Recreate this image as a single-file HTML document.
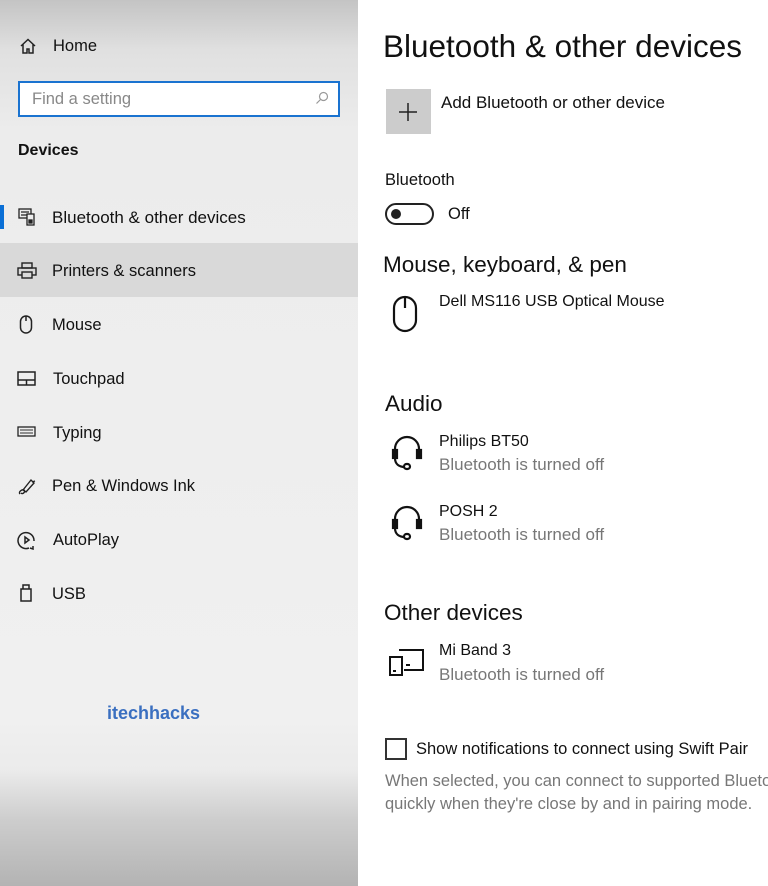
<!DOCTYPE html>
<html><head><meta charset="utf-8"><style>
*{margin:0;padding:0;box-sizing:border-box}
body{width:768px;height:886px;position:relative;overflow:hidden;background:#fff;font-family:"Liberation Sans",sans-serif;color:#111}
#side{position:absolute;left:0;top:0;width:358px;height:886px;background:linear-gradient(to bottom,#c4c4c4 0px,#e0e0e0 50px,#ececec 130px,#eeeeee 400px,#f0f0f0 720px,#ebebeb 770px,#cdcdcd 820px,#b3b3b3 886px)}
.t{position:absolute;white-space:nowrap}
.s{font-size:16.5px;color:#111}
.ic{position:absolute}
.r{font-size:16px}
.g{color:#777;font-size:17px}
</style></head><body>
<div id="side">
 <svg class="ic" style="left:19px;top:37px" width="18" height="18" viewBox="0 0 18 18" fill="none" stroke="#222" stroke-width="1.5"><path d="M2 9L9 2.5 16 9M4 7.5V16h4v-4h2v4h4V7.5"/></svg>
 <div class="t s" style="left:53px;top:37px">Home</div>
 <div style="position:absolute;left:18px;top:81px;width:322px;height:36px;border:2px solid #1a73d0;background:#fff"></div>
 <div class="t" style="left:32px;top:90px;font-size:16.5px;color:#888">Find a setting</div>
 <svg class="ic" style="left:315px;top:91px" width="14" height="14" viewBox="0 0 14 14" fill="none" stroke="#999" stroke-width="1.2"><circle cx="8.5" cy="5.5" r="4"/><path d="M5.5 8.5L1.5 12.5"/></svg>
 <div class="t" style="left:18px;top:142px;font-size:16px;font-weight:bold">Devices</div>
 <div style="position:absolute;left:0;top:205px;width:4px;height:24px;background:#0a6fd6"></div>
 <svg class="ic" style="left:18px;top:208px" width="19" height="19" viewBox="0 0 19 19" fill="none" stroke="#222" stroke-width="1.3"><rect x="1" y="1" width="12" height="9"/><path d="M3 4h8M3 7h8"/><rect x="9" y="6" width="7" height="11" fill="#eee"/><rect x="11" y="12" width="3" height="3" fill="#222"/></svg>
 <div class="t s" style="left:52px;top:208px;font-size:17px">Bluetooth &amp; other devices</div>
 <div style="position:absolute;left:0;top:243px;width:358px;height:54px;background:#d9d9d9"></div>
 <svg class="ic" style="left:17px;top:262px" width="20" height="18" viewBox="0 0 20 18" fill="none" stroke="#222" stroke-width="1.4"><rect x="5" y="1" width="10" height="5"/><rect x="1" y="6" width="18" height="7"/><rect x="5" y="10" width="10" height="6" fill="#d9d9d9"/></svg>
 <div class="t s" style="left:52px;top:262px">Printers &amp; scanners</div>
 <svg class="ic" style="left:19px;top:315px" width="14" height="19" viewBox="0 0 14 19" fill="none" stroke="#222" stroke-width="1.5"><rect x="1.5" y="1" width="11" height="17" rx="5.5"/><path d="M7 1v5"/></svg>
 <div class="t s" style="left:52px;top:316px">Mouse</div>
 <svg class="ic" style="left:17px;top:371px" width="19" height="15" viewBox="0 0 19 15" fill="none" stroke="#222" stroke-width="1.5"><rect x="1" y="1" width="17" height="13"/><path d="M1 9h17M9.5 9v5"/></svg>
 <div class="t s" style="left:53px;top:370px">Touchpad</div>
 <svg class="ic" style="left:17px;top:426px" width="19" height="11" viewBox="0 0 19 11" fill="none" stroke="#222" stroke-width="1.3"><rect x="1" y="1" width="17" height="9"/><path d="M3 4h13M3 7h13" stroke="#555"/></svg>
 <div class="t s" style="left:53px;top:424px">Typing</div>
 <svg class="ic" style="left:17px;top:477px" width="20" height="20" viewBox="0 0 20 20" fill="none" stroke="#222" stroke-width="1.4"><path d="M3 17c-2-2 2-5 4-4s-1 5-3 3M6 13L14 3l3 3-8 9zM15 5l3-1"/></svg>
 <div class="t s" style="left:52px;top:477px">Pen &amp; Windows Ink</div>
 <svg class="ic" style="left:17px;top:531px" width="19" height="19" viewBox="0 0 19 19" fill="none" stroke="#222" stroke-width="1.5"><path d="M12 17A8 8 0 1 1 17 10"/><path d="M8 6v6l4-3z"/><path d="M13 17l3 1 0-3"/></svg>
 <div class="t s" style="left:53px;top:531px">AutoPlay</div>
 <svg class="ic" style="left:20px;top:584px" width="12" height="18" viewBox="0 0 12 18" fill="none" stroke="#222" stroke-width="1.5"><rect x="1" y="5" width="10" height="12"/><path d="M3 5V1h6v4"/></svg>
 <div class="t s" style="left:52px;top:585px">USB</div>
 <div class="t" style="left:107px;top:703px;font-size:18px;font-weight:bold;color:#3a6fc0">itechhacks</div>
</div>

<div class="t" style="left:383px;top:28px;font-size:31.5px;color:#111">Bluetooth &amp; other devices</div>
<div style="position:absolute;left:386px;top:89px;width:45px;height:45px;background:#cccccc"></div>
<svg class="ic" style="left:397px;top:101px" width="22" height="22" viewBox="0 0 22 22" stroke="#222" stroke-width="1.5"><path d="M11 2v18M2 11h18"/></svg>
<div class="t" style="left:441px;top:93px;font-size:17px">Add Bluetooth or other device</div>
<div class="t" style="left:385px;top:171px;font-size:16.5px">Bluetooth</div>
<div style="position:absolute;left:385px;top:203px;width:49px;height:22px;border:2px solid #222;border-radius:11px"></div>
<div style="position:absolute;left:391px;top:209px;width:10px;height:10px;border-radius:5px;background:#222"></div>
<div class="t" style="left:448px;top:205px;font-size:16.5px">Off</div>
<div class="t" style="left:383px;top:252px;font-size:22.5px">Mouse, keyboard, &amp; pen</div>
<svg class="ic" style="left:392px;top:295px" width="26" height="38" viewBox="0 0 26 38" fill="none" stroke="#111" stroke-width="2.2"><rect x="2" y="2" width="22" height="34" rx="11"/><path d="M13 2v11"/></svg>
<div class="t r" style="left:439px;top:293px">Dell MS116 USB Optical Mouse</div>
<div class="t" style="left:385px;top:391px;font-size:22.5px">Audio</div>
<svg class="ic" style="left:391px;top:433px" width="32" height="40" viewBox="0 0 32 40" fill="none" stroke="#111" stroke-width="2.2"><path d="M4 24V16a12 12 0 0 1 24 0v8"/><rect x="2" y="17" width="4" height="8"/><rect x="26" y="17" width="4" height="8"/><path d="M4 25c0 6 4 9 10 9"/><rect x="13" y="31" width="6" height="5" rx="2.5"/></svg>
<div class="t r" style="left:439px;top:433px">Philips BT50</div>
<div class="t g" style="left:439px;top:455px">Bluetooth is turned off</div>
<svg class="ic" style="left:391px;top:503px" width="32" height="40" viewBox="0 0 32 40" fill="none" stroke="#111" stroke-width="2.2"><path d="M4 24V16a12 12 0 0 1 24 0v8"/><rect x="2" y="17" width="4" height="8"/><rect x="26" y="17" width="4" height="8"/><path d="M4 25c0 6 4 9 10 9"/><rect x="13" y="31" width="6" height="5" rx="2.5"/></svg>
<div class="t r" style="left:439px;top:503px">POSH 2</div>
<div class="t g" style="left:439px;top:525px">Bluetooth is turned off</div>
<div class="t" style="left:384px;top:600px;font-size:22.5px">Other devices</div>
<svg class="ic" style="left:388px;top:647px" width="38" height="30" viewBox="0 0 38 30" fill="none" stroke="#111" stroke-width="2"><path d="M11 3h24v20H16"/><rect x="2" y="10" width="12" height="18"/><path d="M5 24h3M18 18h4"/></svg>
<div class="t r" style="left:439px;top:642px">Mi Band 3</div>
<div class="t g" style="left:439px;top:665px">Bluetooth is turned off</div>
<div style="position:absolute;left:385px;top:738px;width:22px;height:22px;border:2px solid #333"></div>
<div class="t" style="left:416px;top:740px;font-size:16.5px">Show notifications to connect using Swift Pair</div>
<div class="t g" style="left:385px;top:772px;font-size:16.5px">When selected, you can connect to supported Bluetooth devices</div>
<div class="t g" style="left:385px;top:795px;font-size:16.5px">quickly when they're close by and in pairing mode.</div>
</body></html>
